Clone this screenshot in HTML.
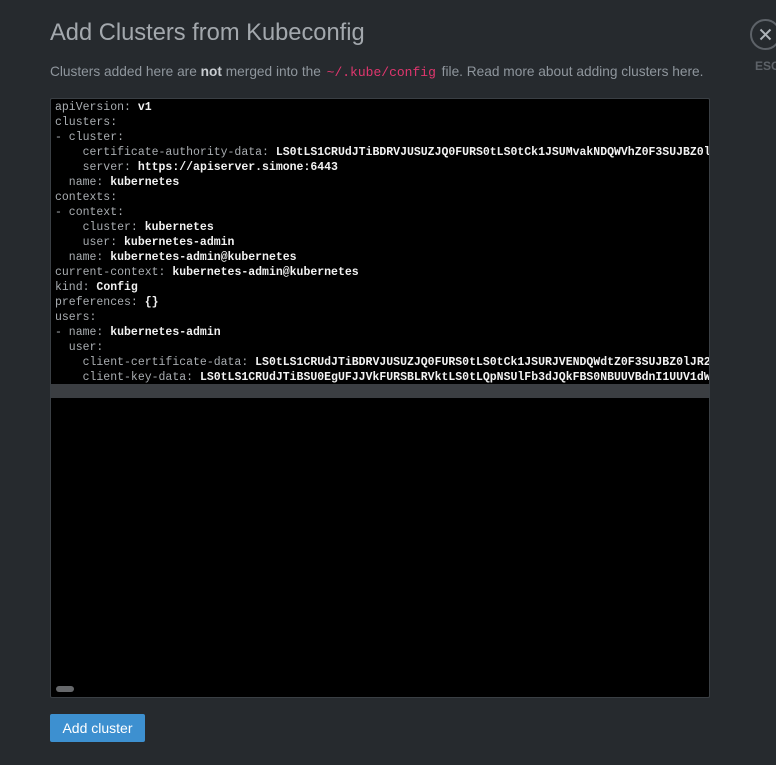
<!DOCTYPE html>
<html><head><meta charset="utf-8"><style>
body{margin:0;width:776px;height:765px;background:#262a2e;overflow:hidden;font-family:"Liberation Sans",sans-serif;position:relative}
.t{position:absolute;left:50px;top:20px;font-size:23.7px;color:#a3a8ad}
.s{position:absolute;left:50px;top:64px;font-size:13.7px;color:#8f969d;white-space:nowrap}
.s b{color:#c8ccd0}
.s code{font-family:"Liberation Mono",monospace;color:#e0366e;font-size:13px;margin:0 2px}
.ed{position:absolute;left:50px;top:98px;width:658px;height:598px;background:#000;border:1px solid #3a3f44;border-radius:2px;overflow:hidden}
.code{position:absolute;left:4px;top:1px;font-family:"Liberation Mono",monospace;font-size:11.5px;line-height:15px;color:#a9adb1;white-space:pre}
.code b{color:#f2f2f2}
.hl{position:absolute;left:0;top:285px;width:100%;height:14px;background:#3b3e42}
.sb{position:absolute;left:5px;top:587px;width:18px;height:6px;border-radius:3px;background:#66686b}
.btn{position:absolute;left:50px;top:714px;width:95px;height:28px;background:#3d90d0;border-radius:2px;color:#fff;font-size:14px;line-height:28px;text-align:center}
.x{position:absolute;left:750px;top:19px;width:31px;height:31px;border:2px solid #5d6268;border-radius:50%;box-sizing:border-box}
.esc{position:absolute;left:755px;top:59px;font-size:12px;font-weight:bold;color:#5d6268}
</style></head><body>
<div class="t">Add Clusters from Kubeconfig</div>
<div class="s">Clusters added here are <b>not</b> merged into the <code>~/.kube/config</code> file. Read more about adding clusters here.</div>
<div class="ed">
<div class="hl"></div>
<div class="code">apiVersion: <b>v1</b>
clusters:
- cluster:
    certificate-authority-data: <b>LS0tLS1CRUdJTiBDRVJUSUZJQ0FURS0tLS0tCk1JSUMvakNDQWVhZ0F3SUJBZ0lBTUE</b>
    server: <b>https://apiserver.simone:6443</b>
  name: <b>kubernetes</b>
contexts:
- context:
    cluster: <b>kubernetes</b>
    user: <b>kubernetes-admin</b>
  name: <b>kubernetes-admin@kubernetes</b>
current-context: <b>kubernetes-admin@kubernetes</b>
kind: <b>Config</b>
preferences: <b>{}</b>
users:
- name: <b>kubernetes-admin</b>
  user:
    client-certificate-data: <b>LS0tLS1CRUdJTiBDRVJUSUZJQ0FURS0tLS0tCk1JSURJVENDQWdtZ0F3SUJBZ0lJR2</b>
    client-key-data: <b>LS0tLS1CRUdJTiBSU0EgUFJJVkFURSBLRVktLS0tLQpNSUlFb3dJQkFBS0NBUUVBdnI1UUV1dW</b></div>
<div class="sb"></div>
</div>
<div class="btn">Add cluster</div>
<div class="x"><svg width="27" height="27" viewBox="0 0 27 27" style="position:absolute;left:0;top:0"><path d="M8.5 8.5L18.5 18.5M18.5 8.5L8.5 18.5" stroke="#aeb3b8" stroke-width="2"/></svg></div>
<div class="esc">ESC</div>
</body></html>
